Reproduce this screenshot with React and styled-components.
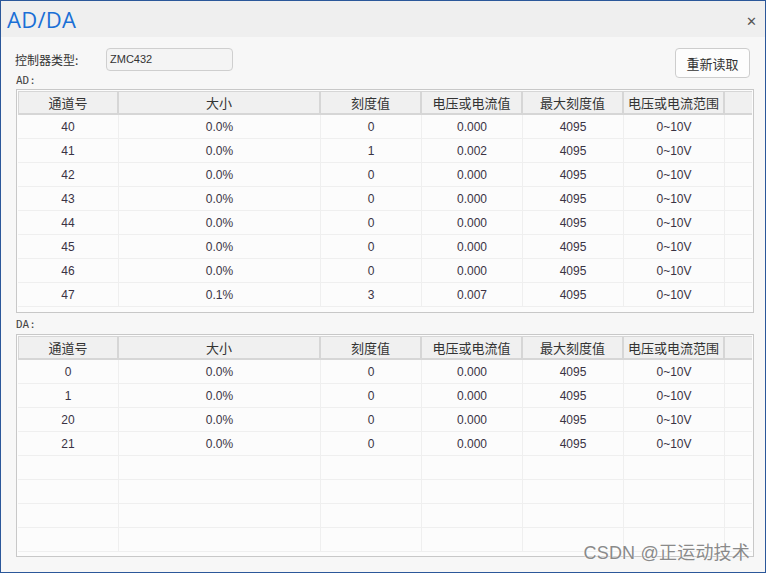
import React from "react";
import styled, { createGlobalStyle } from "styled-components";

const GlobalStyle = createGlobalStyle`
  html, body { margin: 0; padding: 0; background: #fff; }
  body { font-family: "Liberation Sans", "Noto Sans CJK SC", sans-serif; }
`;

const Window = styled.div`
  position: relative;
  width: 766px;
  height: 573px;
  box-sizing: border-box;
  border: 1px solid #2b579a;
  background: #f7f7f7;
  display: flex;
  flex-direction: column;
  overflow: hidden;
`;

const TitleBar = styled.div`
  height: 36px;
  flex: none;
  background: #efefef;
  display: flex;
  align-items: center;
  justify-content: space-between;
  padding: 0 8px 0 6px;
`;

const Title = styled.div`
  font-family: "Open Sans", "Noto Sans", sans-serif;
  font-size: 22px;
  color: #1a6fd6;
  letter-spacing: 0.3px;
  margin-top: -1px;
`;

const Close = styled.div`
  font-family: "DejaVu Sans", sans-serif;
  font-size: 13px;
  color: #555;
  margin-top: 4px;
`;

const Body = styled.div`
  flex: 1;
  padding: 11px 13px 0 14px;
  display: flex;
  flex-direction: column;
`;

const TopRow = styled.div`
  height: 24px;
  display: flex;
  align-items: flex-start;
`;

const FieldLabel = styled.div`
  font-family: "Noto Sans CJK SC", sans-serif;
  font-size: 12px;
  color: #333;
  width: 91px;
  line-height: 23px;
`;

const Field = styled.div`
  width: 122px;
  height: 21px;
  border: 1px solid #cfcfcf;
  border-radius: 4px;
  background: #f4f4f4;
  font-size: 11px;
  color: #333;
  line-height: 20px;
  padding-left: 3px;
  box-sizing: content-box;
`;

const Button = styled.div`
  margin-left: auto;
  margin-right: 2px;
  width: 73px;
  height: 28px;
  border: 1px solid #cdcdcd;
  border-radius: 4px;
  background: #fdfdfd;
  font-family: "Noto Sans CJK SC", sans-serif;
  font-size: 13px;
  color: #333;
  display: flex;
  align-items: center;
  justify-content: center;
  flex: none;
`;

const Section = styled.div`
  font-family: "DejaVu Sans Mono", monospace;
  font-size: 11px;
  font-weight: 400;
  color: #444;
  height: ${(p) => p.$h}px;
  display: flex;
  align-items: flex-end;
  padding: 0 0 ${(p) => p.$pb}px 1px;
  box-sizing: border-box;
`;

const Table = styled.div`
  margin-left: 1px;
  width: 738px;
  height: ${(p) => p.$h}px;
  box-sizing: border-box;
  border: 1px solid #c8c8c8;
  padding: 1px;
  background: #fcfcfc;
  overflow: hidden;
`;

const cols = "101px 202px 101px 101px 101px 101px 26px";

const HeadRow = styled.div`
  display: grid;
  grid-template-columns: ${cols};
  height: 24px;
  box-sizing: border-box;
  border-top: 1px solid #d6d6d6;
  border-bottom: 2px solid #d6d6d6;
  background: #f0f0f0;
`;

const HeadCell = styled.div`
  font-family: "Noto Sans CJK SC", sans-serif;
  font-size: 13px;
  color: #333;
  display: flex;
  align-items: center;
  justify-content: center;
  border-right: 2px solid #d6d6d6;
  ${(p) => p.$first && "border-left: 1px solid #d6d6d6;"}
  ${(p) => p.$last && "border-right: none;"}
`;

const Row = styled.div`
  display: grid;
  grid-template-columns: ${cols};
  height: 24px;
  box-sizing: border-box;
  border-bottom: 1px solid #efefef;
`;

const Cell = styled.div`
  font-size: 12px;
  color: #3a3344;
  display: flex;
  align-items: center;
  justify-content: center;
  border-right: 1px solid #efefef;
  ${(p) => p.$last && "border-right: none;"}
`;

const Watermark = styled.div`
  position: absolute;
  right: 15px;
  bottom: 8px;
  font-family: "Liberation Sans", "Noto Sans CJK SC", sans-serif;
  font-size: 18px;
  color: #8a8a8a;
  text-shadow: 0 0 2px #fff, 0 0 1px #fff;
  letter-spacing: 0.2px;
`;

const headers = ["通道号", "大小", "刻度值", "电压或电流值", "最大刻度值", "电压或电流范围", ""];

const adRows = [
  ["40", "0.0%", "0", "0.000"],
  ["41", "0.0%", "1", "0.002"],
  ["42", "0.0%", "0", "0.000"],
  ["43", "0.0%", "0", "0.000"],
  ["44", "0.0%", "0", "0.000"],
  ["45", "0.0%", "0", "0.000"],
  ["46", "0.0%", "0", "0.000"],
  ["47", "0.1%", "3", "0.007"],
];

const daRows = [
  ["0", "0.0%", "0", "0.000"],
  ["1", "0.0%", "0", "0.000"],
  ["20", "0.0%", "0", "0.000"],
  ["21", "0.0%", "0", "0.000"],
  null,
  null,
  null,
  null,
];

function DataTable({ rows, height }) {
  return (
    <Table $h={height}>
      <HeadRow>
        {headers.map((h, i) => (
          <HeadCell key={i} $first={i === 0} $last={i === headers.length - 1}>
            {h}
          </HeadCell>
        ))}
      </HeadRow>
      {rows.map((r, i) => {
        const vals = r ? [...r, "4095", "0~10V", ""] : ["", "", "", "", "", "", ""];
        return (
          <Row key={i}>
            {vals.map((v, j) => (
              <Cell key={j} $last={j === 6}>
                {v}
              </Cell>
            ))}
          </Row>
        );
      })}
    </Table>
  );
}

export default function App() {
  return (
    <>
      <GlobalStyle />
      <Window>
        <TitleBar>
          <Title>AD/DA</Title>
          <Close>✕</Close>
        </TitleBar>
        <Body>
          <TopRow>
            <FieldLabel>控制器类型:</FieldLabel>
            <Field>ZMC432</Field>
            <Button>重新读取</Button>
          </TopRow>
          <Section $h={17} $pb={2}>AD:</Section>
          <DataTable rows={adRows} height={224} />
          <Section $h={21} $pb={3}>DA:</Section>
          <DataTable rows={daRows} height={223} />
        </Body>
        <Watermark>CSDN @正运动技术</Watermark>
      </Window>
    </>
  );
}
